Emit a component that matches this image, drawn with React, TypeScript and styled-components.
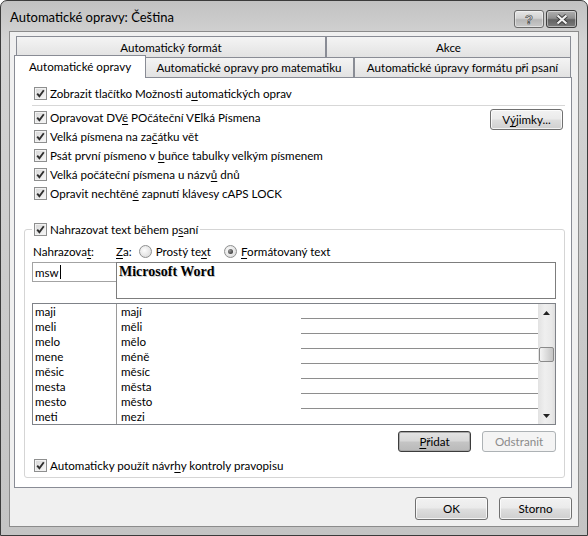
import React from 'react';
import styled, { createGlobalStyle } from 'styled-components';

const GlobalStyle = createGlobalStyle`
  html, body {
    margin: 0;
    padding: 0;
    background: #fff;
  }
  body {
    font-family: Lato, "Noto Sans", sans-serif;
    font-size: 11.6px;
    color: #000;
  }
`;

// outer window frame (Aero style, grayscale)
const Window = styled.div`
  width: 588px;
  height: 536px;
  box-sizing: border-box;
  border: 1px solid #3b3b3b;
  border-radius: 7px 7px 0 0;
  background: linear-gradient(#c2c2c2, #d4d4d4 40px, #cbcbcb 300px, #c4c4c4);
  padding: 0 8px 8px;
  display: flex;
  flex-direction: column;
`;

const TitleBar = styled.div`
  height: 30px;
  display: flex;
  align-items: flex-start;
  padding-right: 2px;
`;

const Title = styled.div`
  flex: 1;
  padding: 8px 0 0 1px;
  font-size: 13px;
  line-height: 16px;
`;

const CaptionButtons = styled.div`
  display: flex;
  gap: 2px;
  margin-top: 9px;
`;

const CaptionButton = styled.div<{ $close?: boolean }>`
  width: ${p => (p.$close ? 31 : 30)}px;
  height: 18px;
  box-sizing: border-box;
  border: 1px solid ${p => (p.$close ? '#3e3e3e' : '#6b6b6b')};
  border-radius: 3px;
  background: ${p =>
    p.$close
      ? 'linear-gradient(#b0b0b0, #909090 45%, #626262 55%, #7c7c7c)'
      : 'linear-gradient(#e6e6e6, #d2d2d2 45%, #b6b6b6 55%, #c9c9c9)'};
  box-shadow: inset 0 0 0 1px rgba(255, 255, 255, 0.45);
  display: flex;
  align-items: center;
  justify-content: center;
  font: bold 13px "Liberation Sans", sans-serif;
  color: #e8e8e8;
  -webkit-text-stroke: 0.7px #4a4a4a;
`;

const Client = styled.div`
  flex: 1;
  border: 1px solid #8b8b8b;
  background: #f0f0f0;
  padding: 4px 6px 6px 4px;
  display: flex;
  flex-direction: column;
`;

const TabRow = styled.div`
  display: flex;
  align-items: flex-end;
  padding: 0 1px 0 2px;
`;

const LowerTabRow = styled(TabRow)`
  height: 20px;
`;

const Tab = styled.div<{ $w?: number; $active?: boolean; $h?: number }>`
  flex: ${p => (p.$w ? `0 0 ${p.$w}px` : '1')};
  box-sizing: border-box;
  height: ${p => (p.$active ? 23 : p.$h ?? 20)}px;
  border: 1px solid #898c95;
  border-bottom: none;
  background: ${p => (p.$active ? '#fff' : 'linear-gradient(#f4f4f4, #e2e2e2)')};
  display: flex;
  align-items: center;
  justify-content: center;
  white-space: nowrap;
  ${p =>
    p.$active &&
    `
    position: relative;
    z-index: 1;
    margin: 0 -2px -1px -2px;
    padding-bottom: 1px;
  `}
`;

const Panel = styled.div`
  flex: 1;
  border: 1px solid #898c95;
  background: #fff;
  padding: 6px 8px 0 9px;
  display: flex;
  flex-direction: column;
`;

const CheckRow = styled.div<{ $indent?: number }>`
  display: flex;
  align-items: center;
  gap: 3px;
  height: 19px;
  margin-left: ${p => p.$indent ?? 10}px;
  white-space: nowrap;
`;

const Box = styled.span`
  flex: none;
  width: 13px;
  height: 13px;
  box-sizing: border-box;
  border: 1px solid #8e8f8f;
  background: linear-gradient(135deg, #d6d6d6, #f8f8f8);
  box-shadow: inset 0 0 0 1px #f2f2f2;
  display: flex;
  align-items: center;
  justify-content: center;
`;

const Acc = styled.span`
  text-decoration: underline;
  text-underline-offset: 2px;
`;

const Separator = styled.div`
  height: 1px;
  background: #d7d7d7;
  margin: 2px -2px 2px 8px;
`;

const OptionsBlock = styled.div`
  display: flex;
  justify-content: space-between;
  align-items: flex-start;
`;

const OptionList = styled.div`
  display: flex;
  flex-direction: column;
`;

const Button = styled.button<{ $w: number; $h?: number; $default?: boolean; $top?: number }>`
  width: ${p => p.$w}px;
  height: ${p => p.$h ?? 21}px;
  box-sizing: border-box;
  margin: ${p => p.$top ?? 0}px 0 0;
  padding: 0;
  border: 1px solid ${p => (p.$default ? '#3c3c3c' : '#707070')};
  border-radius: 3px;
  background: ${p =>
    p.$default
      ? 'linear-gradient(#e4e4e4, #d8d8d8 45%, #c4c4c4 55%, #b9b9b9)'
      : 'linear-gradient(#f2f2f2, #ebebeb 45%, #dddddd 55%, #cfcfcf)'};
  box-shadow: inset 0 0 0 1px ${p => (p.$default ? '#a8a8a8' : 'rgba(255,255,255,.75)')};
  font: 11.6px Lato, "Noto Sans", sans-serif;
  color: #000;

  &:disabled {
    border-color: #adb2b5;
    background: #f4f4f4;
    box-shadow: none;
    color: #8a8a8a;
  }
`;

const Group = styled.fieldset`
  margin: 17px -2px 0 0;
  padding: 0 8px 2px 7px;
  border: 1px solid #d5d5d5;
  border-radius: 3px;
  min-width: 0;
`;

const Legend = styled.legend`
  padding: 0 2px;
`;

const LabelRow = styled.div`
  display: flex;
  align-items: center;
  height: 16px;
  margin-top: 4px;
  white-space: nowrap;
`;

const FieldLabel = styled.span`
  width: 84px;
  box-sizing: border-box;
  padding-left: 1px;
`;

const RadioOption = styled.span`
  display: flex;
  align-items: center;
  gap: 4px;
`;

const Radios = styled.div`
  display: flex;
  align-items: center;
  gap: 7px;

  & > ${RadioOption} + ${RadioOption} {
    margin-left: 6px;
  }
`;

const Radio = styled.span<{ $on?: boolean }>`
  width: 13px;
  height: 13px;
  box-sizing: border-box;
  border-radius: 50%;
  border: 1px solid #8e8f8f;
  background: radial-gradient(circle at 40% 40%, #fdfdfd, #d4d4d4);
  display: flex;
  align-items: center;
  justify-content: center;

  &::after {
    content: '';
    display: ${p => (p.$on ? 'block' : 'none')};
    width: 5px;
    height: 5px;
    border-radius: 50%;
    background: radial-gradient(circle at 35% 35%, #9a9a9a, #1e1e1e);
  }
`;

const InputRow = styled.div`
  display: flex;
  align-items: flex-start;
  margin-top: 3px;
`;

const ReplaceField = styled.div`
  width: 84px;
  height: 20px;
  box-sizing: border-box;
  border: 1px solid #a3a3a3;
  border-right: none;
  padding-left: 2px;
  display: flex;
  align-items: center;
`;

const Caret = styled.span`
  width: 1px;
  height: 14px;
  background: #000;
  margin-left: 1px;
`;

const WithField = styled.div`
  flex: 1;
  height: 37px;
  box-sizing: border-box;
  border: 1px solid #7d7d7d;
  padding: 1px 2px;
  font: bold 14px "Liberation Serif", serif;
  line-height: 16px;
  text-shadow: 1px 1px 0 rgba(0, 0, 0, 0.2);
`;

const List = styled.div`
  display: flex;
  height: 122px;
  box-sizing: border-box;
  border: 1px solid #7f8288;
  margin-top: 4px;
`;

const Rows = styled.div`
  flex: 1;
  display: flex;
  flex-direction: column;
`;

const Row = styled.div`
  display: flex;
  height: 15px;
  line-height: 15px;
`;

const CellFrom = styled.div`
  width: 84px;
  box-sizing: border-box;
  border-right: 1px solid #9a9a9a;
  padding-left: 2px;
`;

const CellTo = styled.div<{ $last?: boolean }>`
  flex: 1;
  padding-left: 4px;
  background: ${p =>
    p.$last
      ? 'none'
      : 'linear-gradient(#8e8e8e, #8e8e8e) no-repeat right bottom / calc(100% - 184px) 1px'};
`;

const Scrollbar = styled.div`
  width: 17px;
  display: flex;
  flex-direction: column;
  background: linear-gradient(90deg, #e2e2e2, #efefef 40%, #e9e9e9 80%, #dedede);
`;

const Arrow = styled.div`
  height: 17px;
  display: flex;
  align-items: center;
  justify-content: center;
`;

const Track = styled.div`
  flex: 1;
`;

const Thumb = styled.div`
  width: 15px;
  height: 15px;
  margin-left: 1px;
  box-sizing: border-box;
  border: 1px solid #8a8a8a;
  border-radius: 2px;
  background: linear-gradient(90deg, #f4f4f4, #dcdcdc 50%, #c4c4c4);
`;

const ListButtons = styled.div`
  display: flex;
  justify-content: flex-end;
  gap: 11px;
  margin-top: 6px;
`;

const Footer = styled.div`
  display: flex;
  justify-content: flex-end;
  gap: 11px;
  margin-top: 9px;
`;

const Check = ({ children, indent, top }: { children: React.ReactNode; indent?: number; top?: number }) => (
  <CheckRow $indent={indent} style={top ? { marginTop: top } : undefined}>
    <Box>
      <svg width="9" height="9" viewBox="0 0 9 9">
        <path d="M1.2 4.6 L3.4 7.2 L7.8 1.3" fill="none" stroke="#2e2e2e" strokeWidth="1.9" />
      </svg>
    </Box>
    <span>{children}</span>
  </CheckRow>
);

const entries: [string, string][] = [
  ['maji', 'mají'],
  ['meli', 'měli'],
  ['melo', 'mělo'],
  ['mene', 'méně'],
  ['měsic', 'měsíc'],
  ['mesta', 'města'],
  ['mesto', 'město'],
  ['meti', 'mezi'],
];

// scroll position of the list thumb, in px below the up arrow
const thumbOffset = 26;

export default function App() {
  return (
    <>
      <GlobalStyle />
      <Window>
        <TitleBar>
          <Title>Automatické opravy: Čeština</Title>
          <CaptionButtons>
            <CaptionButton>?</CaptionButton>
            <CaptionButton $close>
              <svg width="14" height="11" viewBox="0 0 14 11">
                <path d="M2.5 1.5 L11.5 9.5 M11.5 1.5 L2.5 9.5" stroke="#3a3a3a" strokeWidth="4" />
                <path d="M2.5 1.5 L11.5 9.5 M11.5 1.5 L2.5 9.5" stroke="#f2f2f2" strokeWidth="2.2" />
              </svg>
            </CaptionButton>
          </CaptionButtons>
        </TitleBar>

        <Client>
          <TabRow>
            <Tab $w={310} $h={21}>Automatický formát</Tab>
            <Tab $h={21}>Akce</Tab>
          </TabRow>
          <LowerTabRow>
            <Tab $w={132} $active>Automatické opravy</Tab>
            <Tab $w={210}>Automatické opravy pro matematiku</Tab>
            <Tab>Automatické úpravy formátu při psaní</Tab>
          </LowerTabRow>

          <Panel>
            <Check>
              Zobrazit tlačítko Možnosti a<Acc>u</Acc>tomatických oprav
            </Check>
            <Separator />
            <OptionsBlock>
              <OptionList>
                <Check>
                  Opravovat DV<Acc>ě</Acc> POčáteční VElká Písmena
                </Check>
                <Check>
                  Velká písmena na za<Acc>č</Acc>átku vět
                </Check>
                <Check>
                  Psát první písmeno v <Acc>b</Acc>uňce tabulky velkým písmenem
                </Check>
                <Check>
                  Velká počáteční písmena u názv<Acc>ů</Acc> dnů
                </Check>
                <Check>
                  Opravit nechtěn<Acc>é</Acc> zapnutí klávesy cAPS LOCK
                </Check>
              </OptionList>
              <Button $w={73} $top={1}>
                V<Acc>ý</Acc>jimky...
              </Button>
            </OptionsBlock>

            <Group>
              <Legend>
                <Check indent={0}>
                  Nahrazovat text během p<Acc>s</Acc>aní
                </Check>
              </Legend>
              <LabelRow>
                <FieldLabel>
                  Nahrazova<Acc>t</Acc>:
                </FieldLabel>
                <Radios>
                  <span>
                    <Acc>Z</Acc>a:
                  </span>
                  <RadioOption>
                    <Radio />
                    <span>
                      Prostý te<Acc>x</Acc>t
                    </span>
                  </RadioOption>
                  <RadioOption>
                    <Radio $on />
                    <span>
                      <Acc>F</Acc>ormátovaný text
                    </span>
                  </RadioOption>
                </Radios>
              </LabelRow>
              <InputRow>
                <ReplaceField>
                  msw
                  <Caret />
                </ReplaceField>
                <WithField>Microsoft Word</WithField>
              </InputRow>
              <List>
                <Rows>
                  {entries.map(([from, to], i) => (
                    <Row key={from}>
                      <CellFrom>{from}</CellFrom>
                      <CellTo $last={i === entries.length - 1}>{to}</CellTo>
                    </Row>
                  ))}
                </Rows>
                <Scrollbar>
                  <Arrow>
                    <svg width="7" height="4" viewBox="0 0 7 4">
                      <path d="M0 4 L3.5 0 L7 4 Z" fill="#222" />
                    </svg>
                  </Arrow>
                  <Track>
                    <Thumb style={{ marginTop: thumbOffset }} />
                  </Track>
                  <Arrow>
                    <svg width="7" height="4" viewBox="0 0 7 4">
                      <path d="M0 0 L7 0 L3.5 4 Z" fill="#222" />
                    </svg>
                  </Arrow>
                </Scrollbar>
              </List>
              <ListButtons>
                <Button $w={73} $default>
                  <Acc>P</Acc>řidat
                </Button>
                <Button $w={74} disabled>
                  Odstranit
                </Button>
              </ListButtons>
              <Check indent={2} top={4}>
                Automaticky použít návr<Acc>h</Acc>y kontroly pravopisu
              </Check>
            </Group>
          </Panel>

          <Footer>
            <Button $w={73} $h={23}>OK</Button>
            <Button $w={73} $h={23}>Storno</Button>
          </Footer>
        </Client>
      </Window>
    </>
  );
}
